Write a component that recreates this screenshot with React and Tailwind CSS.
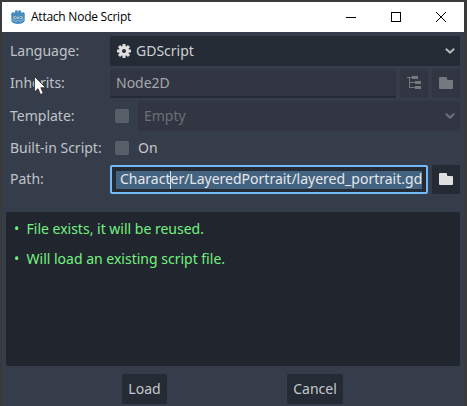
import React from "react";

const Chevron = ({ color }) => (
  <svg width="10" height="6" viewBox="0 0 10 6" fill="none" stroke={color} strokeWidth="2">
    <path d="M.8 .8 5 4.6 9.2 .8" />
  </svg>
);

const Folder = ({ color }) => (
  <svg className="mb-px" width="14" height="12" viewBox="0 0 14 12" fill={color}>
    <path d="M1 0H7.2Q8 0 8 1V2Q8 3 9 3H13Q14 3 14 4V11Q14 12 13 12H1Q0 12 0 11V1Q0 0 1 0Z" />
  </svg>
);

const Tree = () => (
  <svg width="14" height="14" viewBox="0 0 14 14" fill="#74787f" shapeRendering="crispEdges">
    <path d="M5 0h6v3H5zM8 5h6v3H8zM8 10h6v3H8zM0 1h5v1H3v4h5v1H3v4h5v1H2V2H0z" />
  </svg>
);

const Gear = () => (
  <svg width="14" height="14" viewBox="-7 -7 14 14" fill="#e0e0e0">
    {[0, 45, 90, 135].map((a) => (
      <rect key={a} x="-1.5" y="-7" width="3" height="14" rx=".4" transform={`rotate(${a})`} />
    ))}
    <circle r="5" />
    <circle r="2" fill="#252b34" />
  </svg>
);

const Godot = () => (
  <svg width="14" height="14" viewBox="0 0 14 14">
    <path fill="#478cbf" d="M0 4 1.5 2 3 2.8 4 2.3V.8L6 0 6.6 1.5H7.4L8 0 10 .8V2.3L11 2.8 12.5 2 14 4 13.7 5.5V11Q12 14 7 14 2 14 .3 11V5.5Z" />
    <path d="M.6 9.7 3.5 10.2 4 11.2H6L6.3 10.5H7.7L8 11.2H10L10.5 10.2 13.4 9.7" fill="none" stroke="#b4d1e6" strokeWidth=".6" />
    <circle cx="4" cy="7.5" r="1.5" fill="#e8f0f6" />
    <circle cx="10" cy="7.5" r="1.5" fill="#e8f0f6" />
    <circle cx="4.2" cy="7.6" r="1" fill="#656b73" />
    <circle cx="9.8" cy="7.6" r="1" fill="#656b73" />
    <path d="M7 6.8V9" stroke="#e8f0f6" />
  </svg>
);

const Row = ({ label, className, children }) => (
  <div className={`flex items-center ${className}`}>
    <div className="w-[104px] shrink-0 whitespace-nowrap pb-[2px] pl-1 text-[#bfc3c9]">{label}</div>
    {children}
  </div>
);

const IconButton = ({ className, children }) => (
  <div className={`ml-1 flex h-full w-7 shrink-0 items-center justify-center rounded-[2px] ${className}`}>{children}</div>
);

const Check = () => <div className="ml-[5px] h-3.5 w-3.5 shrink-0 rounded-[2px] bg-[#595f68]" />;

export default function App() {
  return (
    <div className="relative flex h-[406px] w-[467px] flex-col overflow-hidden bg-[#3b3a3a] pl-[2px] pr-[3px] pt-[2px] font-['Noto_Sans',sans-serif] text-[14px] leading-[19px]">
      <header className="flex h-[30px] shrink-0 items-center bg-white pl-[9px] text-black">
        <Godot />
        <span className="ml-[6px] flex-1 whitespace-nowrap pb-px font-['Open_Sans',sans-serif] text-[12px] tracking-[-0.24px]">Attach Node Script</span>
        <div className="mr-[18px] flex items-center gap-[35px]">
          <div className="h-px w-2.5 bg-black" />
          <div className="h-2.5 w-2.5 border border-black" />
          <svg width="10" height="10" viewBox="0 0 10 10" stroke="#000" strokeWidth="1">
            <path d="M0 0 10 10M10 0 0 10" />
          </svg>
        </div>
      </header>

      <main className="flex flex-1 flex-col bg-[#363d4a] px-1 pt-1">
        <Row label="Language:" className="h-[30px]">
          <div className="flex h-full flex-1 items-center rounded-[2px] bg-[#252b34] pl-[7px] pr-[5px] text-[#cdcfd2]">
            <Gear />
            <span className="ml-[5px] flex-1 pb-[2px]">GDScript</span>
            <Chevron color="#b5b7ba" />
          </div>
        </Row>
        <Row label="Inherits:" className="mt-[3px] h-[29px]">
          <div className="flex h-full flex-1 items-center rounded-t-[2px] border-b-2 border-[#252b34] bg-[#313642] pl-1.5 text-[#a4a7ad]">
            <span className="pb-px">Node2D</span>
          </div>
          <IconButton className="bg-[#313642] pb-px"><Tree /></IconButton>
          <IconButton className="bg-[#313642]"><Folder color="#74787f" /></IconButton>
        </Row>
        <Row label="Template:" className="mt-[3px] h-[30px]">
          <Check />
          <div className="ml-[9px] flex h-full flex-1 items-center rounded-[2px] bg-[#313642] pl-1.5 pr-[5px] text-[#6b6f78]">
            <span className="flex-1 pb-[2px]">Empty</span>
            <Chevron color="#6d7178" />
          </div>
        </Row>
        <Row label="Built-in Script:" className="mt-[2px] h-[30px]">
          <Check />
          <span className="ml-[9px] pb-[2px] text-[#c4c7cb]">On</span>
        </Row>
        <Row label="Path:" className="mt-[2px] h-[29px]">
          <div className="flex h-full min-w-0 flex-1 items-center rounded-[2px] border-2 border-[#70bafa] bg-[#252b34] px-1">
            <div className="relative h-[18px] w-[306px] whitespace-nowrap bg-[#446380] pl-1 leading-[16px] text-[#e4e8ec]">
              Character/LayeredPortrait/layered_portrait.gd
              <span className="absolute left-[54px] top-0 h-full w-px bg-[#e0e0e0]" />
            </div>
          </div>
          <IconButton className="bg-[#252b34]"><Folder color="#e0e0e0" /></IconButton>
        </Row>

        <ul className="mt-[18px] flex h-[154px] flex-col gap-[11px] rounded-[2px] bg-[#21262e] px-2 pt-[7px] text-[#73f280]">
          <li className="flex"><span className="w-[12.5px]">•</span>File exists, it will be reused.</li>
          <li className="flex"><span className="w-[12.5px]">•</span>Will load an existing script file.</li>
        </ul>

        <footer className="mt-2 flex h-[30px] gap-[120px] pl-[116px] text-[#c4c7cb]">
          <button className="w-[45px] rounded-[2px] bg-[#252b34] pb-[2px]">Load</button>
          <button className="w-[56px] rounded-[2px] bg-[#252b34] pb-[2px]">Cancel</button>
        </footer>
      </main>

      <svg className="absolute left-[34px] top-[76px]" width="13" height="20" viewBox="0 0 13 20">
        <path d="M.5 .5V16L4 12.7 6.5 18.5 9.3 17.3 6.8 11.7H11.7Z" fill="#fff" stroke="#222" strokeWidth=".8" />
      </svg>
    </div>
  );
}
